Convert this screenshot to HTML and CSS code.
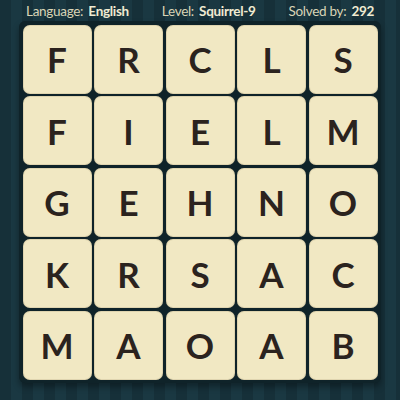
FILE: index.html
```html
<!DOCTYPE html>
<html>
<head>
<meta charset="utf-8">
<link rel="stylesheet" href="styles.css">
</head>
<body>
<div class="page">
  <div class="header">
    <span class="info">Language: <b>English</b></span>
    <span class="info">Level: <b>Squirrel-9</b></span>
    <span class="info">Solved by: <b>292</b></span>
  </div>
  <div class="board">
    <div class="tile">F</div><div class="tile">R</div><div class="tile">C</div><div class="tile">L</div><div class="tile">S</div>
    <div class="tile">F</div><div class="tile">I</div><div class="tile">E</div><div class="tile">L</div><div class="tile">M</div>
    <div class="tile">G</div><div class="tile">E</div><div class="tile">H</div><div class="tile">N</div><div class="tile">O</div>
    <div class="tile">K</div><div class="tile">R</div><div class="tile">S</div><div class="tile">A</div><div class="tile">C</div>
    <div class="tile">M</div><div class="tile">A</div><div class="tile">O</div><div class="tile">A</div><div class="tile">B</div>
  </div>
</div>
</body>
</html>
```
FILE: styles.css
```css
html, body {
  margin: 0;
  padding: 0;
}
body {
  width: 400px;
  height: 400px;
  overflow: hidden;
  background-color: #173139;
  background-image: repeating-linear-gradient(90deg, #163039 0px, #163039 11px, #1a3842 11px, #1a3842 22px);
  font-family: "Lato", "Open Sans", sans-serif;
}
.page {
  display: flex;
  flex-direction: column;
  align-items: center;
}
.header {
  width: 348px;
  height: 20px;
  display: flex;
  justify-content: space-between;
  align-items: center;
  color: #d9d4b6;
  font-size: 13.5px;
  letter-spacing: -0.3px;
  padding-top: 1px;
}
.info b {
  font-weight: 700;
  color: #f0ebd2;
  margin-left: 2px;
}
.board {
  background: #0f2329;
  padding: 3.5px;
  border-radius: 6px;
  display: grid;
  grid-template-columns: repeat(5, 69px);
  grid-auto-rows: 69px;
  gap: 2.5px;
  box-shadow: 0 4px 6px rgba(0, 0, 0, 0.35);
}
.tile {
  background: #f1e8c3;
  border-radius: 7px;
  box-shadow: inset 0 0 0 1px rgba(120, 100, 60, 0.15);
  display: flex;
  align-items: center;
  justify-content: center;
  color: #2b231e;
  font-size: 35px;
  font-weight: 700;
  font-family: "Lato", sans-serif;
}
```
